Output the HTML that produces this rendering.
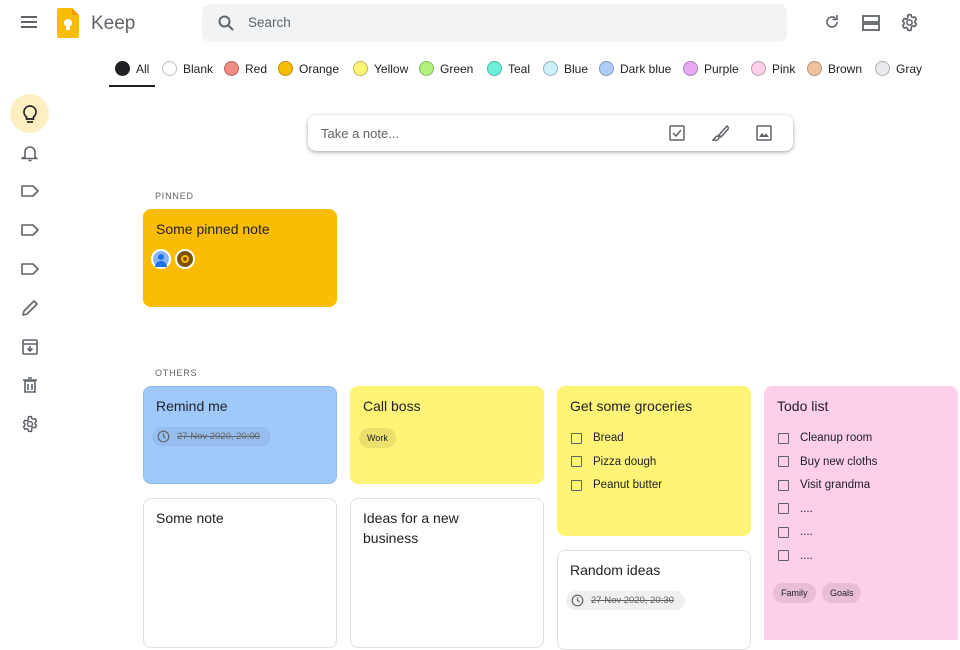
<!DOCTYPE html>
<html><head><meta charset="utf-8"><style>
*{box-sizing:border-box;margin:0;padding:0}
body{width:960px;height:640px;overflow:hidden;background:#fff;font-family:"Liberation Sans",Arial,sans-serif;color:#202124;position:relative}
.a{position:absolute}
.chip{position:absolute;top:61px;display:flex;align-items:center;font-size:12px;color:#202124}
.chip i{display:inline-block;width:15px;height:15px;border-radius:50%;margin-right:6px;border:1px solid rgba(0,0,0,.25)}
.card{position:absolute;width:194px;border-radius:8px}
.card h3{font-size:14px;font-weight:normal;margin:11px 40px 0 13px;line-height:19.5px;color:#202124}
.lab{font-size:9px;letter-spacing:.8px;color:#5f6368;position:absolute;left:155px}
.li{font-size:11.5px;display:flex;align-items:center;margin:0 0 0 14px;height:23.5px;color:#202124}
.li b{width:11px;height:11px;border:1.5px solid #5f6368;border-radius:1px;margin-right:11px}
.tag{display:inline-block;font-size:9px;padding:5px 8px;border-radius:10px;background:rgba(0,0,0,.08)}
.ico{position:absolute;left:21px}
</style></head><body>
<svg class="a" style="left:20px;top:15px" width="18" height="14"><path d="M1 2h16M1 7h16M1 12h16" stroke="#5f6368" stroke-width="2"/></svg>
<svg class="a" style="left:57px;top:8px" width="22" height="30"><path d="M0 2a2 2 0 0 1 2-2h13l7 7v21a2 2 0 0 1-2 2H2a2 2 0 0 1-2-2z" fill="#fbbc04"/><path d="M15 0l7 7h-7z" fill="#f29900"/><circle cx="11" cy="15" r="4" fill="#fff"/><rect x="9" y="19" width="4" height="3" fill="#fff"/></svg>
<div class="a" style="left:91px;top:13px;font-size:19px;color:#5f6368">Keep</div>
<div class="a" style="left:202px;top:4px;width:585px;height:38px;background:#f1f3f4;border-radius:8px"></div>
<svg class="a" style="left:218px;top:15px" width="16" height="16"><circle cx="6.5" cy="6.5" r="5" fill="none" stroke="#5f6368" stroke-width="2"/><path d="M10 10l5 5" stroke="#5f6368" stroke-width="2"/></svg>
<div class="a" style="left:248px;top:15px;font-size:13.5px;color:#5f6368">Search</div>
<svg class="a" style="left:824px;top:14px" width="16" height="16"><path d="M13 8a5 5 0 1 1-1.5-3.6" fill="none" stroke="#5f6368" stroke-width="1.6"/><path d="M13 1v4.5H8.5" fill="none" stroke="#5f6368" stroke-width="1.6"/></svg>
<svg class="a" style="left:862px;top:15px" width="18" height="16"><rect x="1" y="1" width="16" height="6" fill="none" stroke="#5f6368" stroke-width="1.8"/><rect x="1" y="9" width="16" height="6" fill="none" stroke="#5f6368" stroke-width="1.8"/></svg>
<svg class="a" style="left:900px;top:13px" width="19" height="19" viewBox="0 0 24 24"><path d="M12 2l2 .3.5 2.5 1.8 1 2.4-.9 2 3.4-1.9 1.7v2l1.9 1.7-2 3.4-2.4-.9-1.8 1L14 21.7 12 22l-2-.3-.5-2.5-1.8-1-2.4.9-2-3.4 1.9-1.700v-2L3.3 10.3l2-3.4 2.4.9 1.8-1L10 2.3z" fill="none" stroke="#5f6368" stroke-width="2" stroke-linejoin="round"/><circle cx="12" cy="12" r="3.3" fill="none" stroke="#5f6368" stroke-width="2"/></svg>
<div class="chip" style="left:115px"><i style="background:#202124;border-color:#202124"></i>All</div>
<div class="a" style="left:109px;top:85px;width:46px;height:2px;background:#202124"></div>
<div class="chip" style="left:162px"><i style="background:#fff"></i>Blank</div>
<div class="chip" style="left:224px"><i style="background:#f28b82"></i>Red</div>
<div class="chip" style="left:278px"><i style="background:#fbbc04"></i>Orange</div>
<div class="chip" style="left:353px"><i style="background:#fff475"></i>Yellow</div>
<div class="chip" style="left:419px"><i style="background:#b1f37e"></i>Green</div>
<div class="chip" style="left:487px"><i style="background:#6cf0d8"></i>Teal</div>
<div class="chip" style="left:543px"><i style="background:#cbf0f8"></i>Blue</div>
<div class="chip" style="left:599px"><i style="background:#aecbfa"></i>Dark blue</div>
<div class="chip" style="left:683px"><i style="background:#e9a8f5"></i>Purple</div>
<div class="chip" style="left:751px"><i style="background:#fdcfe8"></i>Pink</div>
<div class="chip" style="left:807px"><i style="background:#efc29e"></i>Brown</div>
<div class="chip" style="left:875px"><i style="background:#e8eaed"></i>Gray</div>
<div class="a" style="left:10px;top:94px;width:39px;height:39px;border-radius:50%;background:#feefc3"></div>
<svg class="ico" style="top:104px" width="18" height="20"><path d="M9 2a6 6 0 0 0-3.5 10.9V15h7v-2.1A6 6 0 0 0 9 2z" fill="none" stroke="#202124" stroke-width="1.7"/><path d="M6 18h6" stroke="#202124" stroke-width="1.7"/></svg>
<svg class="ico" style="top:144px" width="18" height="18"><path d="M4 13V8a5 5 0 0 1 10 0v5l1.5 1.5h-15z" fill="none" stroke="#5f6368" stroke-width="1.6"/><path d="M7.5 16.5h3" stroke="#5f6368" stroke-width="1.6"/></svg>
<svg class="ico" style="top:184px" width="18" height="14"><path d="M1 2h11l5 5-5 5H1z" fill="none" stroke="#5f6368" stroke-width="1.6" stroke-linejoin="round"/></svg>
<svg class="ico" style="top:223px" width="18" height="14"><path d="M1 2h11l5 5-5 5H1z" fill="none" stroke="#5f6368" stroke-width="1.6" stroke-linejoin="round"/></svg>
<svg class="ico" style="top:262px" width="18" height="14"><path d="M1 2h11l5 5-5 5H1z" fill="none" stroke="#5f6368" stroke-width="1.6" stroke-linejoin="round"/></svg>
<svg class="ico" style="top:299px" width="18" height="18"><path d="M2 16l1-4L13 2l3 3L6 15z" fill="none" stroke="#5f6368" stroke-width="1.6" stroke-linejoin="round"/></svg>
<svg class="ico" style="top:338px" width="18" height="18"><rect x="2" y="2" width="14" height="14" rx="1" fill="none" stroke="#5f6368" stroke-width="1.6"/><path d="M2 6h14M9 8v5M6.5 10.5L9 13l2.5-2.5" fill="none" stroke="#5f6368" stroke-width="1.6"/></svg>
<svg class="ico" style="top:376px" width="18" height="18"><path d="M4 5h10v11H4zM2 4h14M7 2h4M7 8v6M11 8v6" fill="none" stroke="#5f6368" stroke-width="1.6"/></svg>
<svg class="ico" style="top:415px" width="18" height="18" viewBox="0 0 24 24"><path d="M12 2l2 .3.5 2.5 1.8 1 2.4-.9 2 3.4-1.9 1.7v2l1.9 1.7-2 3.4-2.4-.9-1.8 1L14 21.7 12 22l-2-.3-.5-2.5-1.8-1-2.4.9-2-3.4 1.9-1.7v-2L3.3 10.3l2-3.4 2.4.9 1.8-1L10 2.3z" fill="none" stroke="#5f6368" stroke-width="2" stroke-linejoin="round"/><circle cx="12" cy="12" r="3.3" fill="none" stroke="#5f6368" stroke-width="2"/></svg>
<div class="a" style="left:308px;top:115px;width:485px;height:36px;border-radius:8px;box-shadow:0 1px 3px rgba(60,64,67,.35),0 2px 6px rgba(60,64,67,.15);background:#fff"></div>
<div class="a" style="left:321px;top:126px;font-size:13px;color:#5f6368">Take a note...</div>
<svg class="a" style="left:669px;top:125px" width="16" height="16"><rect x="1" y="1" width="14" height="14" rx="1" fill="none" stroke="#5f6368" stroke-width="1.5"/><path d="M4 8l3 3 5-6" fill="none" stroke="#5f6368" stroke-width="1.5"/></svg>
<svg class="a" style="left:712px;top:124px" width="17" height="17"><path d="M15 2l-8 9 2 2 8-9zM6 12c-3 0-3 3-5 4 3 1 6 0 6-3z" fill="none" stroke="#5f6368" stroke-width="1.5"/></svg>
<svg class="a" style="left:756px;top:125px" width="16" height="16"><rect x="1" y="1" width="14" height="14" rx="1" fill="none" stroke="#5f6368" stroke-width="1.5"/><path d="M3 12l3-4 2 2.5 2-2 3 3.5z" fill="#5f6368"/></svg>
<div class="lab" style="top:191px">PINNED</div>
<div class="lab" style="top:368px">OTHERS</div>
<div class="card" style="left:143px;top:209px;height:98px;background:#fbbc04"><h3>Some pinned note</h3>
<div class="a" style="left:8px;top:40px;width:20px;height:20px;border-radius:50%;background:#8ab4f8;border:2px solid #fff"><div class="a" style="left:5px;top:3px;width:6px;height:6px;border-radius:50%;background:#1a73e8"></div><div class="a" style="left:2px;top:10px;width:12px;height:6px;border-radius:6px 6px 0 0;background:#1a73e8"></div></div>
<div class="a" style="left:32px;top:40px;width:20px;height:20px;border-radius:50%;background:#7a5200;border:2px solid #fff"><div class="a" style="left:4px;top:4px;width:8px;height:8px;border-radius:50%;border:2px solid #fbbc04"></div></div>
</div>
<div class="card" style="left:143px;top:386px;height:98px;background:#a0c9fb;border:1px solid #8eb9f3"><h3 style="margin-top:10px;margin-left:12px">Remind me</h3>
<div class="a" style="left:8px;top:40px;width:119px;height:19px;border-radius:10px;background:rgba(0,0,0,.06)"></div>
<svg class="a" style="left:13px;top:43px" width="13" height="13"><circle cx="6.5" cy="6.5" r="5.3" fill="none" stroke="#5f6368" stroke-width="1.2"/><path d="M6.5 3.5v3l2 1.5" fill="none" stroke="#5f6368" stroke-width="1.2"/></svg>
<div class="a" style="left:33px;top:44px;font-size:9.5px;color:#5f6368;text-decoration:line-through">27 Nov 2020, 20:00</div></div>
<div class="card" style="left:350px;top:386px;height:98px;background:#fff475"><h3>Call boss</h3><div style="margin:11px 0 0 9px"><span class="tag">Work</span></div></div>
<div class="card" style="left:557px;top:386px;height:150px;background:#fff475"><h3>Get some groceries</h3><div style="margin-top:10px">
<div class="li"><b></b>Bread</div><div class="li"><b></b>Pizza dough</div><div class="li"><b></b>Peanut butter</div></div></div>
<div class="card" style="left:764px;top:386px;height:254px;background:#fdcfe8;border-radius:8px 8px 0 0"><h3>Todo list</h3><div style="margin-top:10px">
<div class="li"><b></b>Cleanup room</div><div class="li"><b></b>Buy new cloths</div><div class="li"><b></b>Visit grandma</div><div class="li"><b></b>....</div><div class="li"><b></b>....</div><div class="li"><b></b>....</div></div>
<div style="margin:15px 0 0 9px"><span class="tag">Family</span> <span class="tag" style="margin-left:2px">Goals</span></div></div>
<div class="card" style="left:143px;top:498px;height:150px;border:1px solid #e0e0e0"><h3 style="margin-left:12px;margin-top:10px">Some note</h3></div>
<div class="card" style="left:350px;top:498px;height:150px;border:1px solid #e0e0e0"><h3 style="margin-left:12px;margin-top:10px;margin-right:60px">Ideas for a new business</h3></div>
<div class="card" style="left:557px;top:550px;height:100px;border:1px solid #e0e0e0"><h3 style="margin-left:12px;margin-top:10px">Random ideas</h3>
<div class="a" style="left:8px;top:40px;width:119px;height:19px;border-radius:10px;background:rgba(0,0,0,.06)"></div>
<svg class="a" style="left:13px;top:43px" width="13" height="13"><circle cx="6.5" cy="6.5" r="5.3" fill="none" stroke="#5f6368" stroke-width="1.2"/><path d="M6.5 3.5v3l2 1.5" fill="none" stroke="#5f6368" stroke-width="1.2"/></svg>
<div class="a" style="left:33px;top:44px;font-size:9.5px;color:#5f6368;text-decoration:line-through">27 Nov 2020, 20:30</div></div>
</body></html>
